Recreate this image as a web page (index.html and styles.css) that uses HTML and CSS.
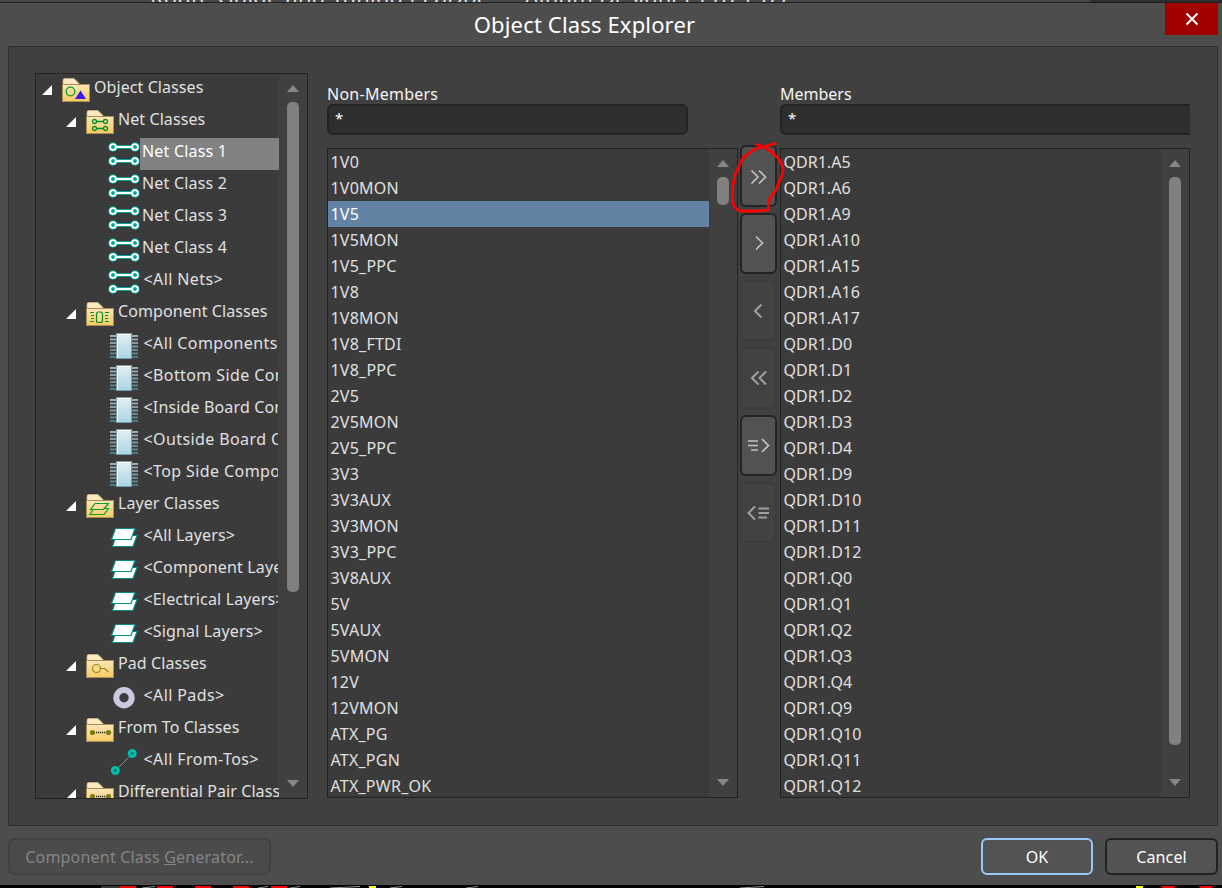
FILE: index.html
```
<!DOCTYPE html>
<html lang="en">
<head>
    <meta charset="UTF-8">
    <meta name="viewport" content="width=device-width, initial-scale=1.0">
    <title>Object Class Explorer</title>
    <link rel="stylesheet" href="styles.css">
</head>
<body>
    <svg class="sprites" width="0" height="0">
        <defs>
            <linearGradient id="folderFill" x1="0" y1="0" x2="0" y2="1">
                <stop offset="0" stop-color="#fbe6b8" />
                <stop offset="1" stop-color="#f6cb62" />
            </linearGradient>
            <linearGradient id="chipFill" x1="0" y1="0" x2="0" y2="1">
                <stop offset="0" stop-color="#e3eff3" />
                <stop offset="1" stop-color="#abd5e3" />
            </linearGradient>
            <linearGradient id="pinFill" gradientUnits="userSpaceOnUse" x1="0" y1="4" x2="0" y2="28">
                <stop offset="0" stop-color="#a9b4bb" />
                <stop offset="1" stop-color="#4d7585" />
            </linearGradient>
        </defs>
        <symbol id="folder" viewBox="0 0 28 32">
            <path d="M1 10V5.5L2.5 4.5H12L17 9.5V12H1z" fill="#fce9bf" stroke="#c9b285" stroke-width=".8" />
            <rect x=".5" y="10.5" width="27" height="17" fill="url(#folderFill)" stroke="#a98f55" />
        </symbol>
        <symbol id="net" viewBox="0 0 32 32">
            <g stroke="#00a69c" stroke-width="4"><path d="M5 9H27M5 23H27" /></g>
            <g fill="#00a69c"><circle cx="5" cy="9" r="4.7" /><circle cx="27" cy="9" r="4.7" /><circle cx="5" cy="23" r="4.7" /><circle cx="27" cy="23" r="4.7" /></g>
            <g stroke="#fff" stroke-width="1.8"><path d="M8 9H24M8 23H24" /></g>
            <g fill="#00a69c" stroke="#fff" stroke-width="1.9"><circle cx="5" cy="9" r="2.9" /><circle cx="27" cy="9" r="2.9" /><circle cx="5" cy="23" r="2.9" /><circle cx="27" cy="23" r="2.9" /></g>
        </symbol>
        <symbol id="chip" viewBox="0 0 32 32">
            <path d="M2 5h28v2H2zM2 8.5h28v2H2zM2 12h28v2H2zM2 15.5h28v2H2zM2 19h28v2H2zM2 22.5h28v2H2zM2 26h28v2H2z" fill="url(#pinFill)" />
            <rect x="8.5" y="3.5" width="15" height="25" fill="url(#chipFill)" stroke="#7d9aa6" />
            <path d="M9.5 28V4.5H23" fill="none" stroke="#fff" />
        </symbol>
        <symbol id="layers" viewBox="0 0 32 32">
            <g fill="#fff" stroke="#008f87" stroke-width="1.2">
                <path d="M8 13.5H29L25 24.5H4.5z" />
                <path d="M7.5 6.5H27L23 17.5H3.5z" />
            </g>
        </symbol>
        <symbol id="pad" viewBox="0 0 32 32">
            <circle cx="16" cy="15.7" r="7.7" fill="none" stroke="#c9c9df" stroke-width="6" />
        </symbol>
        <symbol id="fromto" viewBox="0 0 32 32">
            <path d="M7.5 24.5L24.5 7.5" stroke="#8a8a8a" />
            <g fill="#0b6f68" stroke="#00bfae" stroke-width="3"><circle cx="7.3" cy="24.5" r="3" /><circle cx="24.3" cy="7.5" r="3" /></g>
        </symbol>
        <symbol id="g-object" viewBox="0 0 28 32">
            <circle cx="8.5" cy="17.5" r="4.3" fill="none" stroke="#0a9d2c" stroke-width="1.3" />
            <path d="M18.5 16.5L24 25H13z" fill="#3a19f0" />
        </symbol>
        <symbol id="g-net" viewBox="0 0 28 32">
            <g fill="none" stroke="#0a8f26" stroke-width="1.3">
                <path d="M10.5 15.5H17M10.5 22.5H17" />
                <circle cx="8.5" cy="15.5" r="2" /><circle cx="19.5" cy="15.5" r="2" /><circle cx="8.5" cy="22.5" r="2" /><circle cx="19.5" cy="22.5" r="2" />
            </g>
        </symbol>
        <symbol id="g-chip" viewBox="0 0 28 32">
            <g fill="none" stroke="#0a8f26" stroke-width="1.2">
                <path d="M4 14.5H8M5 17.5H8M5 20.5H8M4 23.5H8M19 14.5H23M19 17.5H22M19 20.5H22M19 23.5H23" />
                <rect x="10.5" y="14" width="6" height="10.5" rx="2" />
            </g>
        </symbol>
        <symbol id="g-layers" viewBox="0 0 28 32">
            <g fill="none" stroke="#0a9d2c" stroke-width="1.2">
                <path d="M9 13.5H22.5L17.5 19.5H4.5z" />
                <path d="M7 19.5L4 24.5H18L22.5 18.5H18.5" />
            </g>
        </symbol>
        <symbol id="g-pad" viewBox="0 0 28 32">
            <path d="M14.5 18.5H18.5L22.5 22" fill="none" stroke="#8f8a14" stroke-width="1.1" />
            <circle cx="10.5" cy="18.5" r="4" fill="none" stroke="#8f8a14" stroke-width="1.1" />
        </symbol>
        <symbol id="g-fromto" viewBox="0 0 28 32">
            <circle cx="6.5" cy="18.5" r="2.6" fill="#7d7a12" /><circle cx="22.5" cy="18.5" r="2.6" fill="#7d7a12" />
            <path d="M10 18.5H19.5" stroke="#222" stroke-width="1.3" stroke-dasharray="1.2 .8" />
        </symbol>
    </svg>

    <div class="app-title"><span>Route Guide and Tuning.PcbDoc * - Altium Designer Pro.157)</span></div>

    <div class="dialog">
        <div class="titlebar">
            <h1>Object Class Explorer</h1>
            <button class="close">
                <svg width="14" height="14" viewBox="0 0 14 14"><path d="M1.5 1.5L12.5 12.5M12.5 1.5L1.5 12.5" stroke="#fff" stroke-width="2" /></svg>
            </button>
        </div>

        <div class="panel">
            <div class="tree">
                <ul class="tree-list">
                    <li><i class="arrow"></i><svg class="folder"><use href="#folder" /><use href="#g-object" /></svg><span>Object Classes</span></li>
                    <li class="group"><i class="arrow"></i><svg class="folder"><use href="#folder" /><use href="#g-net" /></svg><span>Net Classes</span></li>
                    <li class="leaf selected"><svg><use href="#net" /></svg><span>Net Class 1</span></li>
                    <li class="leaf"><svg><use href="#net" /></svg><span>Net Class 2</span></li>
                    <li class="leaf"><svg><use href="#net" /></svg><span>Net Class 3</span></li>
                    <li class="leaf"><svg><use href="#net" /></svg><span>Net Class 4</span></li>
                    <li class="leaf all"><svg><use href="#net" /></svg><span>&lt;All Nets&gt;</span></li>
                    <li class="group"><i class="arrow"></i><svg class="folder"><use href="#folder" /><use href="#g-chip" /></svg><span>Component Classes</span></li>
                    <li class="leaf all"><svg><use href="#chip" /></svg><span>&lt;All Components&gt;</span></li>
                    <li class="leaf all"><svg><use href="#chip" /></svg><span>&lt;Bottom Side Components&gt;</span></li>
                    <li class="leaf all narrow"><svg><use href="#chip" /></svg><span>&lt;Inside Board Components&gt;</span></li>
                    <li class="leaf all"><svg><use href="#chip" /></svg><span>&lt;Outside Board Components&gt;</span></li>
                    <li class="leaf all"><svg><use href="#chip" /></svg><span>&lt;Top Side Components&gt;</span></li>
                    <li class="group"><i class="arrow"></i><svg class="folder"><use href="#folder" /><use href="#g-layers" /></svg><span>Layer Classes</span></li>
                    <li class="leaf all narrow"><svg><use href="#layers" /></svg><span>&lt;All Layers&gt;</span></li>
                    <li class="leaf all narrow"><svg><use href="#layers" /></svg><span>&lt;Component Layers&gt;</span></li>
                    <li class="leaf all narrow"><svg><use href="#layers" /></svg><span>&lt;Electrical Layers&gt;</span></li>
                    <li class="leaf all narrow"><svg><use href="#layers" /></svg><span>&lt;Signal Layers&gt;</span></li>
                    <li class="group"><i class="arrow"></i><svg class="folder"><use href="#folder" /><use href="#g-pad" /></svg><span>Pad Classes</span></li>
                    <li class="leaf all"><svg><use href="#pad" /></svg><span>&lt;All Pads&gt;</span></li>
                    <li class="group"><i class="arrow"></i><svg class="folder"><use href="#folder" /><use href="#g-fromto" /></svg><span>From To Classes</span></li>
                    <li class="leaf all"><svg><use href="#fromto" /></svg><span>&lt;All From-Tos&gt;</span></li>
                    <li class="group"><i class="arrow"></i><svg class="folder"><use href="#folder" /><use href="#g-fromto" /></svg><span>Differential Pair Classes</span></li>
                </ul>
                <div class="scrollbar"><i class="up"></i><div class="track"><div class="thumb tree-thumb"></div></div><i class="down"></i></div>
            </div>

            <div class="column">
                <label for="nonMembers">Non-Members</label>
                <input type="text" id="nonMembers" class="filter" value="*">
                <div class="listbox">
                    <ul class="items">
                        <li>1V0</li>
                        <li>1V0MON</li>
                        <li class="selected">1V5</li>
                        <li>1V5MON</li>
                        <li>1V5_PPC</li>
                        <li>1V8</li>
                        <li>1V8MON</li>
                        <li>1V8_FTDI</li>
                        <li>1V8_PPC</li>
                        <li>2V5</li>
                        <li>2V5MON</li>
                        <li>2V5_PPC</li>
                        <li>3V3</li>
                        <li>3V3AUX</li>
                        <li>3V3MON</li>
                        <li>3V3_PPC</li>
                        <li>3V8AUX</li>
                        <li>5V</li>
                        <li>5VAUX</li>
                        <li>5VMON</li>
                        <li>12V</li>
                        <li>12VMON</li>
                        <li>ATX_PG</li>
                        <li>ATX_PGN</li>
                        <li>ATX_PWR_OK</li>
                    </ul>
                    <div class="scrollbar"><i class="up"></i><div class="track"><div class="thumb short-thumb"></div></div><i class="down"></i></div>
                </div>
            </div>

            <div class="transfer">
                <button><svg viewBox="0 0 24 16"><path d="M4.5 2.5L11 9L4.5 15.5M12 2.5L18.5 9L12 15.5" /></svg></button>
                <button><svg viewBox="0 0 24 16"><path d="M9 1.5L15.5 8L9 14.5" /></svg></button>
                <button class="off"><svg viewBox="0 0 24 16"><path d="M14.5 1.5L8 8L14.5 14.5" /></svg></button>
                <button class="off"><svg viewBox="0 0 24 16"><path d="M11.5 1.5L5 8L11.5 14.5M19 1.5L12.5 8L19 14.5" /></svg></button>
                <button><svg viewBox="0 0 24 16"><path d="M1 4H11M1 8.5H11M4 13H11M15 2L21.5 8.5L15 15" /></svg></button>
                <button class="off"><svg viewBox="0 0 24 16"><path d="M8 1.5L1.5 8L8 14.5M11.5 3.5H22M11.5 8H22M11.5 12.5H20" /></svg></button>
                <!-- hand-drawn marker around the first button -->
                <svg class="marker" viewBox="0 0 60 76"><path d="M26.500 4.500L36 8L43 13L48 18L51 23L53 28L52.500 34L49 42L46 50L40 58L38.500 64V70L28 71H10Q4 68 3 63Q1.500 56 3 45L5 35L10 24Q13 17 18 14Q24 9 29 8L45 3.700" /></svg>
            </div>

            <div class="column members">
                <label for="members">Members</label>
                <input type="text" id="members" class="filter" value="*">
                <div class="listbox">
                    <ul class="items">
                        <li>QDR1.A5</li>
                        <li>QDR1.A6</li>
                        <li>QDR1.A9</li>
                        <li>QDR1.A10</li>
                        <li>QDR1.A15</li>
                        <li>QDR1.A16</li>
                        <li>QDR1.A17</li>
                        <li>QDR1.D0</li>
                        <li>QDR1.D1</li>
                        <li>QDR1.D2</li>
                        <li>QDR1.D3</li>
                        <li>QDR1.D4</li>
                        <li>QDR1.D9</li>
                        <li>QDR1.D10</li>
                        <li>QDR1.D11</li>
                        <li>QDR1.D12</li>
                        <li>QDR1.Q0</li>
                        <li>QDR1.Q1</li>
                        <li>QDR1.Q2</li>
                        <li>QDR1.Q3</li>
                        <li>QDR1.Q4</li>
                        <li>QDR1.Q9</li>
                        <li>QDR1.Q10</li>
                        <li>QDR1.Q11</li>
                        <li>QDR1.Q12</li>
                    </ul>
                    <div class="scrollbar"><i class="up"></i><div class="track"><div class="thumb long-thumb"></div></div><i class="down"></i></div>
                </div>
            </div>
        </div>

        <div class="footer">
            <button class="btn generator">Component Class <u>G</u>enerator...</button>
            <button class="btn ok">OK</button>
            <button class="btn cancel">Cancel</button>
        </div>
    </div>

    <svg class="board" width="1222" height="3" viewBox="0 0 1222 3">
        <rect width="1222" height="3" fill="#000" />
        <rect x="101" y="1" width="19" height="2" fill="#3a3a3a" />
        <path d="M120 1h16v2h-16zM157 1h16v2h-16zM195 1h16v2h-16zM233 1h16v2h-16zM271 1h16v2h-16zM1160 1h16l-3 2h-10zM1198 1h16l-3 2h-10z" fill="#f00" />
        <path d="M369 1h7v2h-7zM1136 1h7v2h-7z" fill="#ff0" />
        <path d="M142 3L155 1.5M258 3L268 1.5M290 3L300 1.5M330 3L360 1.5M390 3L402 1.5M466 3L478 1.5M740 3L764 1.5" stroke="#999" />
    </svg>
</body>
</html>
```
FILE: styles.css
```
* {
    box-sizing: border-box;
}

body {
    margin: 0;
    width: 1222px;
    height: 888px;
    overflow: hidden;
    background-color: #000;
    color: #e0e0e0;
    font-family: 'Noto Sans', 'Open Sans', sans-serif;
    font-size: 16px;
}

ul {
    list-style: none;
    margin: 0;
    padding: 0;
}

button {
    font: inherit;
    color: inherit;
    padding: 0;
}

.sprites {
    display: block;
    height: 0;
}

.app-title {
    display: flex;
    align-items: flex-end;
    height: 3px;
    overflow: hidden;
    padding-left: 150px;
    background: linear-gradient(to right, #484848 1090px, #2e2e2e 1090px);
    border-bottom: 1px solid #1e1e1e;
    font-size: 22px;
    letter-spacing: 0.15px;
    line-height: 12px;
    white-space: nowrap;
}

.dialog {
    height: 882px;
    background-color: #4d4d4d;
}

.titlebar {
    position: relative;
    height: 43px;
}

.titlebar h1 {
    margin: 0;
    padding-right: 53px;
    text-align: center;
    font-size: 22px;
    font-weight: normal;
    letter-spacing: 0.15px;
    line-height: 43px;
    color: #fff;
}

.close {
    position: absolute;
    top: 0;
    right: 4px;
    display: flex;
    align-items: center;
    justify-content: center;
    width: 53px;
    height: 32px;
    border: none;
    background-color: #a00000;
}

.panel {
    display: flex;
    height: 780px;
    margin: 0 4px 0 8px;
    padding: 26px 27px 26px 26px;
    border: 1px solid #303030;
    background-color: #404040;
}

/* class tree */
.tree {
    display: flex;
    width: 273px;
    height: 726px;
    border: 1px solid #222;
    background-color: #3b3b3b;
}

.tree-list {
    width: 243px;
    overflow: hidden;
}

.tree-list li {
    display: flex;
    height: 32px;
    padding-left: 6px;
    letter-spacing: 0.08px;
    white-space: nowrap;
}

.tree-list .group {
    padding-left: 30px;
}

.tree-list .leaf {
    padding-left: 72px;
    letter-spacing: 0.2px;
}

.tree-list .all {
    letter-spacing: 0.4px;
}

.tree-list .narrow {
    letter-spacing: 0.15px;
}

.tree-list svg {
    flex: none;
    width: 32px;
    height: 32px;
}

.tree-list .folder {
    width: 28px;
}

.tree-list span {
    flex: 1;
    min-width: 0;
    padding-left: 4px;
    line-height: 26px;
}

.tree-list .leaf span {
    padding-left: 2px;
}

.tree-list .all span {
    padding-left: 3.5px;
    overflow: hidden;
    margin-right: 1px;
}

.tree-list .selected span {
    background-color: #828282;
    color: #fff;
}

.arrow {
    flex: none;
    width: 10px;
    height: 10px;
    margin: 11px 10px 0 0;
    background-color: #fff;
    clip-path: polygon(100% 0, 100% 100%, 0 100%);
}

/* scrollbars */
.scrollbar {
    display: flex;
    flex-direction: column;
    align-items: center;
    flex: none;
    width: 28px;
    background-color: #404040;
}

.scrollbar .up,
.scrollbar .down {
    width: 12px;
    height: 7px;
    background-color: #868686;
}

.scrollbar .up {
    margin: 11px 0 10px;
    clip-path: polygon(50% 0, 100% 100%, 0 100%);
}

.scrollbar .down {
    margin-bottom: 11px;
    clip-path: polygon(0 0, 100% 0, 50% 100%);
}

.track {
    flex: 1;
}

.thumb {
    width: 12px;
    border-radius: 5px;
    background-color: #808080;
}

.tree-thumb {
    height: 490px;
}

.short-thumb {
    height: 28px;
}

.long-thumb {
    height: 568px;
}

/* list columns */
.column {
    display: flex;
    flex-direction: column;
    width: 411px;
    margin-left: 19px;
    padding-top: 10px;
}

.column.members {
    width: 410px;
    margin-left: 3px;
}

.column label {
    height: 21px;
    line-height: 22px;
    letter-spacing: 0.25px;
    color: #f4f4f4;
}

.members label {
    letter-spacing: 0;
}

.filter {
    width: 361px;
    height: 31px;
    margin-bottom: 13px;
    padding: 0 7px 4px 6px;
    border: 2px solid #232323;
    border-radius: 6px;
    background-color: #2e2e2e;
    color: #fff;
    font: inherit;
    font-size: 15px;
}

.members .filter {
    width: 410px;
    border-right: none;
    border-radius: 6px 0 0 6px;
}

.listbox {
    display: flex;
    height: 650px;
    border: 1px solid #222;
    background-color: #3b3b3b;
}

.items {
    flex: 1;
    overflow: hidden;
}

.items li {
    height: 26px;
    padding-left: 2.4px;
    letter-spacing: 0.25px;
    line-height: 26px;
}

.members .items li {
    letter-spacing: 0.05px;
}

.items .selected {
    background-color: #6283a3;
    color: #fff;
}

/* move buttons */
.transfer {
    position: relative;
    display: flex;
    flex-direction: column;
    gap: 6px;
    width: 37px;
    margin-left: 2px;
    padding-top: 72.4px;
}

.transfer button {
    display: flex;
    align-items: center;
    justify-content: center;
    flex: none;
    height: 61.3px;
    border: 2px solid #232323;
    border-radius: 6px;
    background-color: #525252;
}

.transfer button.off {
    border-color: #3c3c3c;
    background-color: #424242;
}

.transfer button svg {
    width: 24px;
    height: 16px;
    fill: none;
    stroke: #c4c4c4;
    stroke-width: 1.6;
}

.transfer button.off svg {
    stroke: #a0a0a0;
    stroke-width: 2;
}

.transfer .marker {
    position: absolute;
    left: -10px;
    top: 67px;
    width: 60px;
    height: 76px;
    fill: none;
    stroke: #f00;
    stroke-width: 2.8;
    stroke-linecap: round;
    stroke-linejoin: round;
}

/* bottom buttons */
.footer {
    display: flex;
    gap: 12px;
    padding: 12px 4px 0 8px;
}

.btn {
    height: 37px;
    border: 2px solid #222;
    border-radius: 6px;
    background-color: #535353;
    color: #fff;
}

.generator {
    width: 263px;
    margin-right: auto;
    border-color: #424242;
    background-color: #4b4b4b;
    color: #858585;
    letter-spacing: 0.2px;
}

.ok {
    width: 112px;
    border-color: #99c9f9;
}

.cancel {
    width: 113px;
    letter-spacing: 0.15px;
}

.board {
    display: block;
}
```
